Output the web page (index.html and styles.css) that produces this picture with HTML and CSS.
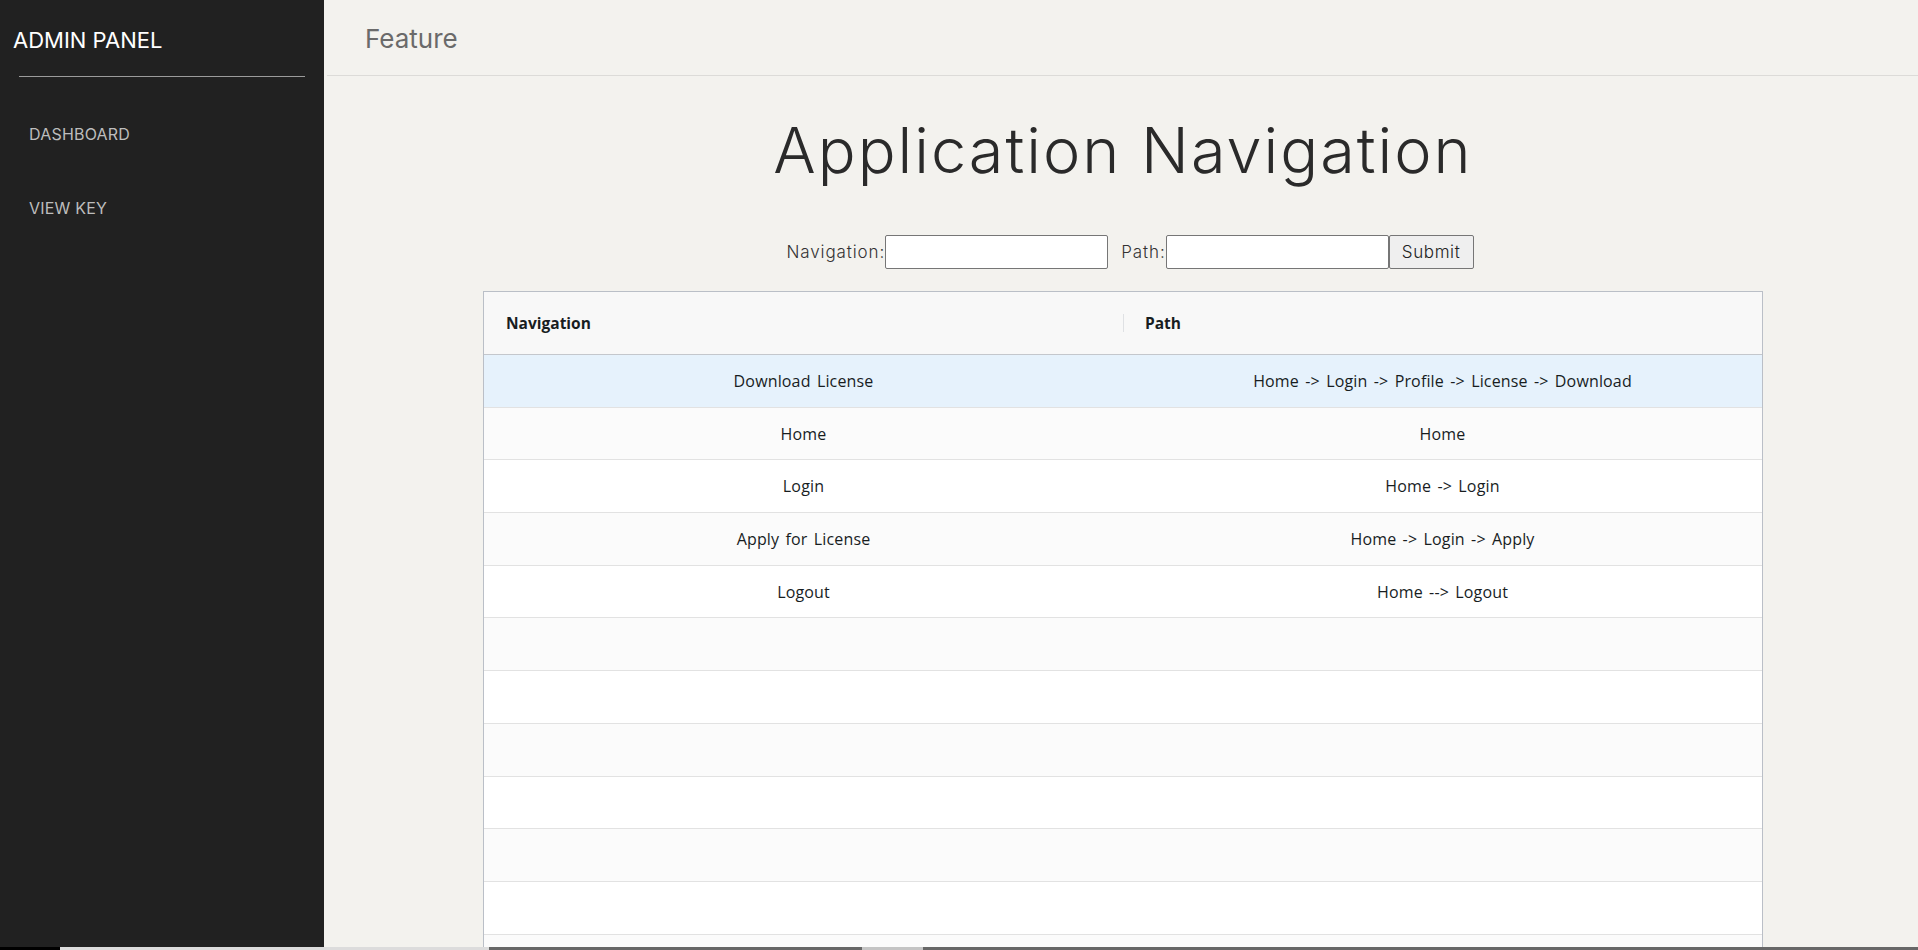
FILE: index.html
```html
<!DOCTYPE html>
<html lang="en">
<head>
<meta charset="utf-8">
<title>Admin Panel - Feature</title>
<link rel="stylesheet" href="styles.css">
</head>
<body>
<div class="app">
  <aside class="sidebar">
    <div class="brand">ADMIN PANEL</div>
    <div class="divider"></div>
    <nav class="menu">
      <a class="menu-link" href="#">DASHBOARD</a>
      <a class="menu-link" href="#">VIEW KEY</a>
    </nav>
  </aside>
  <main class="main">
    <header class="topbar"><span class="topbar-title">Feature</span></header>
    <section class="content">
      <h1 class="title">Application Navigation</h1>
      <form class="nav-form">
        <label class="form-label">Navigation:</label><input class="form-input" type="text">
        <label class="form-label path-label">Path:</label><input class="form-input" type="text"><button class="form-btn" type="button">Submit</button>
      </form>
      <div class="grid">
        <div class="grid-header">
          <div class="hcell">Navigation</div>
          <div class="hcell hcell-sep">Path</div>
        </div>
        <div class="grid-row row-hover"><div class="cell">Download License</div><div class="cell">Home -&gt; Login -&gt; Profile -&gt; License -&gt; Download</div></div>
        <div class="grid-row row-odd"><div class="cell">Home</div><div class="cell">Home</div></div>
        <div class="grid-row"><div class="cell">Login</div><div class="cell">Home -&gt; Login</div></div>
        <div class="grid-row row-odd"><div class="cell">Apply for License</div><div class="cell">Home -&gt; Login -&gt; Apply</div></div>
        <div class="grid-row"><div class="cell">Logout</div><div class="cell">Home --&gt; Logout</div></div>
        <div class="grid-row row-odd"><div class="cell"></div><div class="cell"></div></div>
        <div class="grid-row"><div class="cell"></div><div class="cell"></div></div>
        <div class="grid-row row-odd"><div class="cell"></div><div class="cell"></div></div>
        <div class="grid-row"><div class="cell"></div><div class="cell"></div></div>
        <div class="grid-row row-odd"><div class="cell"></div><div class="cell"></div></div>
        <div class="grid-row"><div class="cell"></div><div class="cell"></div></div>
        <div class="grid-row row-odd"><div class="cell"></div><div class="cell"></div></div>
        <div class="grid-row"><div class="cell"></div><div class="cell"></div></div>
      </div>
    </section>
  </main>
</div>
<div class="hscroll">
  <div class="seg seg-black"></div>
  <div class="seg seg-light"></div>
  <div class="seg seg-dark1"></div>
  <div class="seg seg-thumb"></div>
  <div class="seg seg-dark2"></div>
</div>
</body>
</html>
```
FILE: styles.css
```css
html, body {
  margin: 0;
  padding: 0;
  height: 950px;
  overflow: hidden;
}
body {
  font-family: Inter, "Liberation Sans", sans-serif;
  background: #f3f2ee;
}
.app {
  display: flex;
  height: 947px;
  overflow: hidden;
}
.sidebar {
  width: 324px;
  flex: 0 0 324px;
  background: #212121;
  color: #fff;
}
.brand {
  box-sizing: border-box;
  height: 76px;
  padding: 4px 0 0 13px;
  line-height: 72px;
  font-size: 22px;
  font-weight: 400;
  color: #fff;
}
.divider {
  height: 1px;
  background: #9b9b9b;
  margin: 0 19px 0 19px;
}
.menu {
  display: flex;
  flex-direction: column;
  padding-top: 20px;
}
.menu-link {
  display: block;
  height: 74px;
  line-height: 74px;
  padding-left: 29px;
  font-size: 16px;
  color: #bdbdbd;
  text-decoration: none;
  letter-spacing: 0.2px;
}
.main {
  flex: 1;
  display: flex;
  flex-direction: column;
  background: #f3f2ee;
  min-width: 0;
  overflow: hidden;
}
.topbar {
  flex: 0 0 76px;
  box-sizing: border-box;
  height: 76px;
  border-bottom: 1px solid #dcdbd8;
  margin-left: 3px;
  padding-left: 38px;
  padding-top: 2px;
  display: flex;
  align-items: center;
}
.topbar-title {
  font-size: 26px;
  color: #6a6a6a;
  font-weight: 400;
}
.content {
  flex: 0 0 auto;
  display: flex;
  flex-direction: column;
  align-items: center;
  padding-left: 4px;
}
.title {
  margin: 36px 0 0 0;
  font-size: 63px;
  line-height: 76px;
  font-weight: 300;
  color: #2a2a2a;
  letter-spacing: 2px;
}
.nav-form {
  margin-top: 47px;
  display: flex;
  align-items: center;
  height: 34px;
  padding-left: 14px;
}
.form-label {
  font-size: 17px;
  font-weight: 300;
  color: #333;
  letter-spacing: 0.9px;
}
.path-label {
  margin-left: 13px;
}
.form-input {
  box-sizing: border-box;
  width: 223px;
  height: 34px;
  margin: 0;
  border: 1px solid #767676;
  border-radius: 2px;
  background: #fff;
  padding: 0 4px;
}
.form-btn {
  box-sizing: border-box;
  width: 85px;
  height: 34px;
  margin: 0;
  border: 1px solid #767676;
  border-radius: 2px;
  background: #efefef;
  font-family: Inter, "Liberation Sans", sans-serif;
  font-size: 17px;
  font-weight: 300;
  color: #222;
  letter-spacing: 0.6px;
}
.grid {
  margin-top: 22px;
  width: 1280px;
  box-sizing: border-box;
  border: 1px solid #babfc7;
  background: #fff;
  font-family: "Open Sans", "Noto Sans", sans-serif;
  color: #181d1f;
}
.grid-header {
  display: flex;
  height: 63px;
  box-sizing: border-box;
  background: #f8f8f8;
  border-bottom: 1px solid #c4c7cc;
}
.hcell {
  flex: 1;
  display: flex;
  align-items: center;
  padding-left: 22px;
  font-size: 15.5px;
  font-weight: 700;
  position: relative;
}
.hcell-sep::before {
  content: "";
  position: absolute;
  left: 0;
  top: 22px;
  height: 18px;
  width: 1px;
  background: #dfe1e4;
}
.grid-row {
  display: flex;
  height: 52.7px;
  box-sizing: border-box;
  border-bottom: 1px solid #e2e2e2;
  background: #fff;
}
.row-odd {
  background: #fbfbfb;
}
.row-hover {
  background: #e6f2fc;
}
.cell {
  flex: 1;
  display: flex;
  align-items: center;
  justify-content: center;
  font-size: 16px;
  word-spacing: 2px;
  letter-spacing: 0.15px;
}
.hscroll {
  display: flex;
  height: 3px;
}
.seg { height: 3px; }
.seg-black { width: 60px; background: #000; }
.seg-light { width: 429px; background: #dcdcdc; }
.seg-dark1 { width: 373px; background: #676767; }
.seg-thumb { width: 61px; background: #c4c4c4; }
.seg-dark2 { flex: 1; background: #676767; }
```
